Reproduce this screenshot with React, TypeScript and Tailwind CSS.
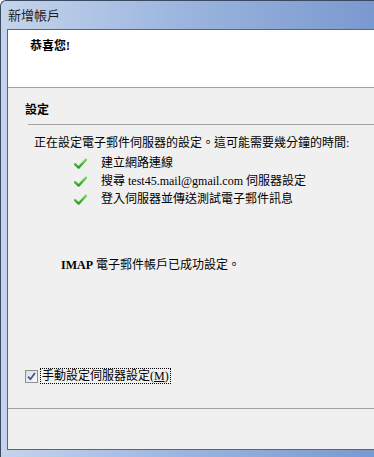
import React from 'react';

const bodyFont = { fontFamily: '"Liberation Serif", "Noto Sans CJK TC", serif' };
const uiFont = { fontFamily: '"Noto Sans CJK TC", "Noto Sans", sans-serif' };

// Green tick used in the progress list
const GreenCheck = () => (
  <svg width="13" height="11" viewBox="0 0 13 11" className="shrink-0">
    <defs>
      <linearGradient id="gc" x1="0" y1="0" x2="0" y2="1">
        <stop offset="0" stopColor="#7fd35a" />
        <stop offset="1" stopColor="#2f9a2a" />
      </linearGradient>
    </defs>
    <path d="M1 6.2 L4.6 9.6 L12 1.6" fill="none" stroke="url(#gc)" strokeWidth="2.3" strokeLinecap="round" strokeLinejoin="round" />
  </svg>
);

const steps = ['建立網路連線', '搜尋 test45.mail@gmail.com 伺服器設定', '登入伺服器並傳送測試電子郵件訊息'];

export default function App() {
  return (
    <div
      className="w-[374px] h-[457px] flex flex-col overflow-hidden rounded-tl-[6px] border-t border-l border-[#3a4a63] bg-linear-to-r from-[#c4d4ec] via-[#9bb4de] to-[#7a99cf]"
    >
      {/* title bar */}
      <div className="h-[28px] shrink-0 flex items-center pl-[7px] text-[13px] text-[#1e1e1e]" style={uiFont}>
        新增帳戶
      </div>

      {/* client area */}
      <div className="flex-1 flex flex-col ml-[6px] mb-[7px] border-l border-t border-b border-[#56667e] bg-[#f0f0f0] text-[12px] text-black" style={bodyFont}>
        <div className="h-[58px] shrink-0 bg-white border-b border-[#a0a0a0] pl-[22px] pt-[9px]">
          <div className="font-bold leading-[14px]">恭喜您!</div>
        </div>

        <div className="flex-1 flex flex-col">
          <div className="pl-[17px] pt-[15px] font-bold leading-[14px]">設定</div>
          <div className="ml-[20px] mt-[7px] border-t border-[#a0a0a0]" />

          <div className="pl-[26px] mt-[9px] leading-[18px]">正在設定電子郵件伺服器的設定。這可能需要幾分鐘的時間:</div>
          <div className="flex flex-col mt-[2px]">
            {steps.map((s) => (
              <div key={s} className="flex items-center h-[18px] pl-[66px] gap-[14px]">
                <GreenCheck />
                <span className="leading-[18px]">{s}</span>
              </div>
            ))}
          </div>

          <div className="pl-[53px] mt-[50px] leading-[14px]">
            <span className="font-bold">IMAP</span> 電子郵件帳戶已成功設定。
          </div>

          <div className="mt-auto mb-[24px] pl-[17px] flex items-center gap-[2px]">
            <div className="w-[13px] h-[13px] border border-[#8e8f8f] bg-linear-to-br from-[#dcdcdc] to-[#fbfbfb] flex items-center justify-center">
              <svg width="9" height="9" viewBox="0 0 9 9">
                <path d="M1 4.6 L3.4 7.2 L8 1" fill="none" stroke="#3d56a0" strokeWidth="1.8" />
              </svg>
            </div>
            <div className="border border-dotted border-black px-[1px] leading-[14px]">
              手動設定伺服器設定(<span className="underline">M</span>)
            </div>
          </div>
        </div>

        <div className="h-[41px] shrink-0 border-t border-[#a0a0a0]" />
      </div>
    </div>
  );
}
